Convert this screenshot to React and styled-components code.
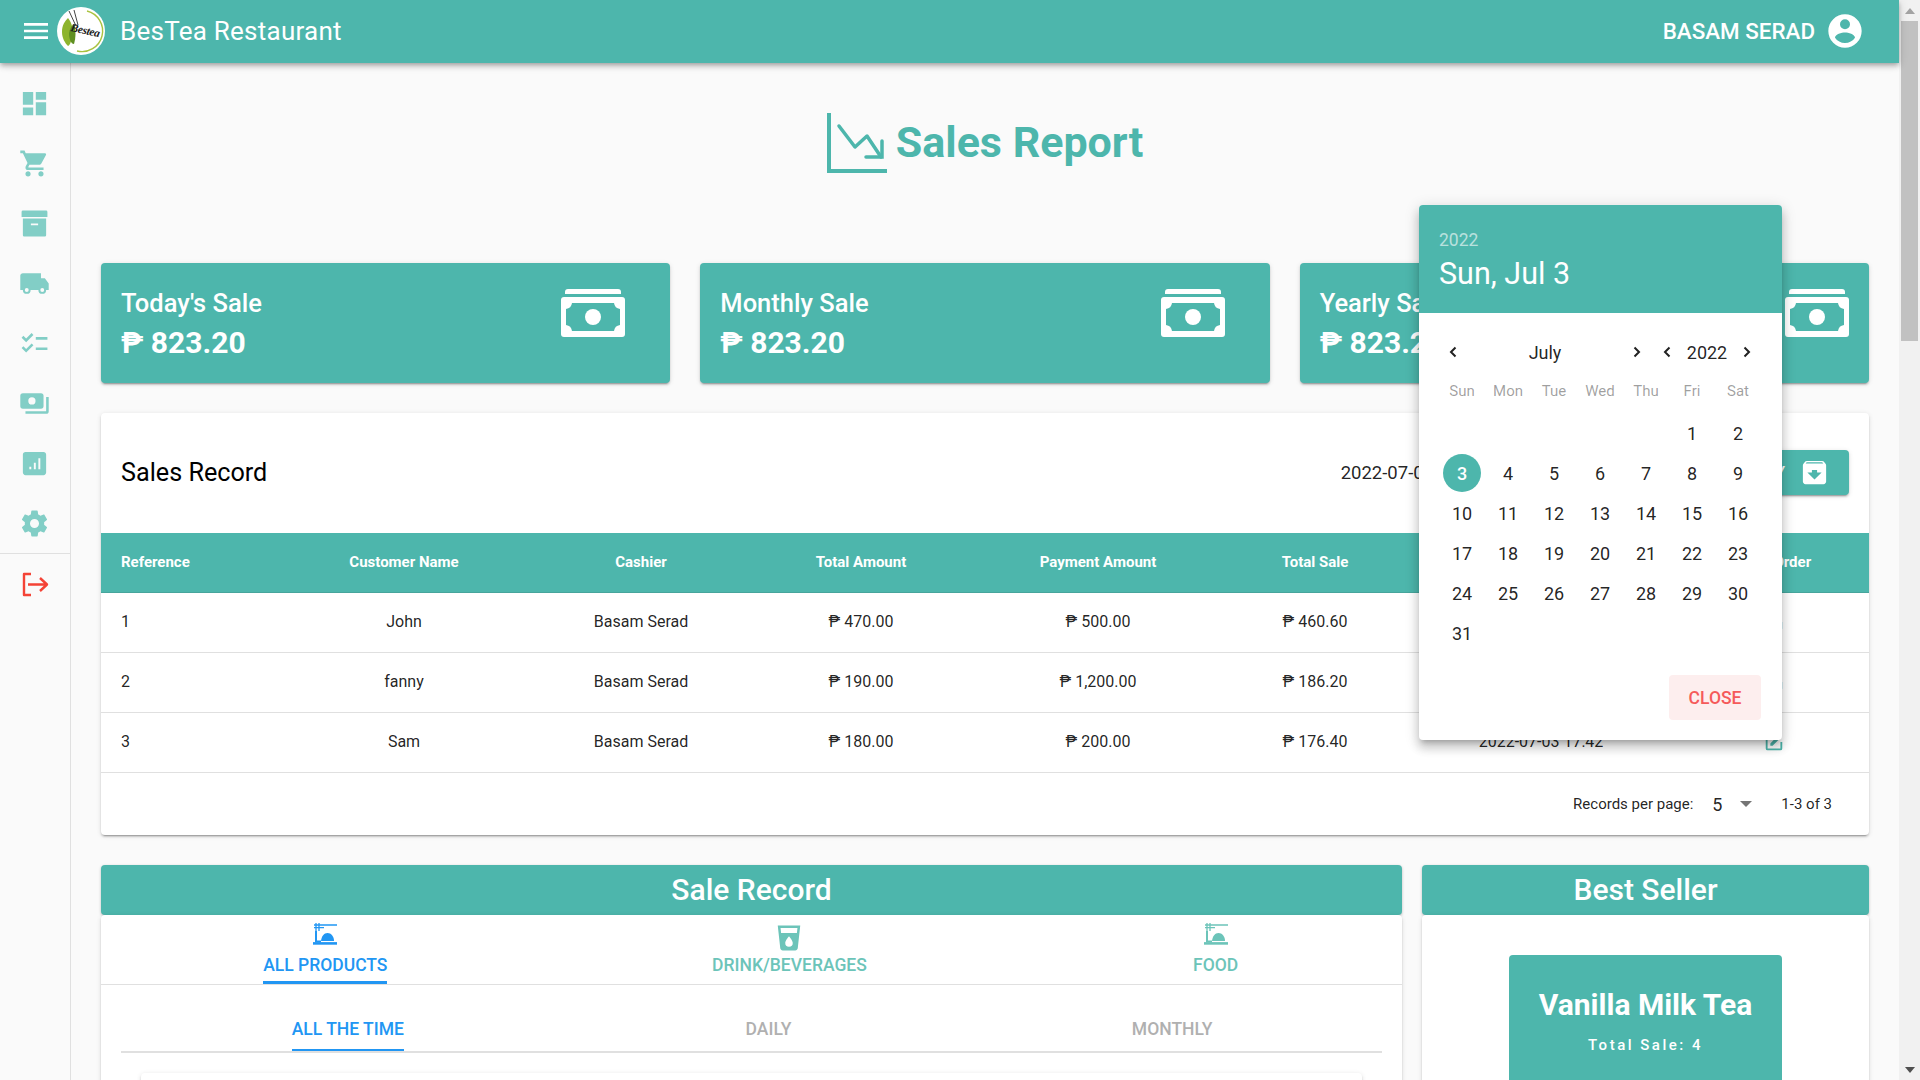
import React from 'react';
import styled, { createGlobalStyle } from 'styled-components';

const TEAL = '#4db6ac';
const BLUE = '#2196f3';

const GlobalStyle = createGlobalStyle`
  * { box-sizing: border-box; }
  html, body { margin: 0; padding: 0; height: 100%; overflow: hidden; }
  body {
    font-family: 'Roboto', 'Liberation Sans', sans-serif;
    background: #fafafa;
    color: rgba(0, 0, 0, 0.87);
  }
`;

/* ---------- Page frame ---------- */
const Shell = styled.div`
  display: flex;
  width: 100vw;
  height: 100vh;
  overflow: hidden;
`;

const Page = styled.div`
  flex: 1;
  min-width: 0;
  display: flex;
  flex-direction: column;
`;

const Body = styled.div`
  flex: 1;
  min-height: 0;
  display: flex;
`;

const Scrollbar = styled.div`
  flex: 0 0 21px;
  display: flex;
  flex-direction: column;
  align-items: center;
  background: #f1f1f1;
`;

const ScrollArrow = styled.div`
  flex: 0 0 21px;
  display: flex;
  align-items: center;
  justify-content: center;
  &::after {
    content: '';
    border-left: 5px solid transparent;
    border-right: 5px solid transparent;
    ${(p) => (p.$down ? 'border-top: 6px solid #505050;' : 'border-bottom: 6px solid #a3a3a3;')}
  }
`;

const ScrollThumb = styled.div`
  flex: 0 0 320px;
  width: 17px;
  background: #c1c1c1;
`;

const ScrollTrack = styled.div`
  flex: 1;
`;

/* ---------- Top bar ---------- */
const TopBar = styled.header`
  flex: 0 0 63px;
  display: flex;
  align-items: center;
  padding: 0 34px 2px 20px;
  background: ${TEAL};
  color: #fff;
  position: relative;
  z-index: 3;
  box-shadow: 0 2px 4px -1px rgba(0, 0, 0, 0.2), 0 4px 5px 0 rgba(0, 0, 0, 0.14), 0 1px 10px 0 rgba(0, 0, 0, 0.12);
`;

const Brand = styled.div`
  margin-left: 15px;
  font-size: 26px;
  letter-spacing: 0.25px;
`;

const LogoWrap = styled.div`
  margin-left: 5px;
  width: 48px;
  height: 48px;
  display: flex;
`;

const UserName = styled.div`
  margin-left: auto;
  margin-right: 10px;
  font-size: 22.4px;
  font-weight: 500;
`;

const Icon = styled.svg`
  display: block;
  flex: none;
  width: ${(p) => p.$size || 24}px;
  height: ${(p) => p.$size || 24}px;
  fill: ${(p) => p.$color || 'currentColor'};
`;

const Glyph = ({ d, size, color }) => (
  <Icon viewBox="0 0 24 24" $size={size} $color={color}>
    <path d={d} fillRule="evenodd" />
  </Icon>
);

const P = {
  menu: 'M3,6H21V8H3V6M3,11H21V13H3V11M3,16H21V18H3V16Z',
  account: 'M12,19.2C9.5,19.2 7.29,17.92 6,16C6.03,14 10,12.9 12,12.9C14,12.9 17.97,14 18,16C16.71,17.92 14.5,19.2 12,19.2M12,5A3,3 0 0,1 15,8A3,3 0 0,1 12,11A3,3 0 0,1 9,8A3,3 0 0,1 12,5M12,2A10,10 0 0,0 2,12A10,10 0 0,0 12,22A10,10 0 0,0 22,12C22,6.47 17.5,2 12,2Z',
  dashboard: 'M13,3V9H21V3M13,21H21V11H13M3,21H11V15H3M3,13H11V3H3V13Z',
  cart: 'M17,18C15.89,18 15,18.89 15,20A2,2 0 0,0 17,22A2,2 0 0,0 19,20C19,18.89 18.1,18 17,18M1,2V4H3L6.6,11.59L5.24,14.04C5.09,14.32 5,14.65 5,15A2,2 0 0,0 7,17H19V15H7.42A0.25,0.25 0 0,1 7.17,14.75C7.17,14.7 7.18,14.66 7.2,14.63L8.1,13H15.55C16.3,13 16.96,12.58 17.3,11.97L20.88,5.5C20.95,5.34 21,5.17 21,5A1,1 0 0,0 20,4H5.21L4.27,2M7,18C5.89,18 5,18.89 5,20A2,2 0 0,0 7,22A2,2 0 0,0 9,20C9,18.89 8.1,18 7,18Z',
  archive: 'M3,2H21A1,1 0 0,1 22,3V7H2V3A1,1 0 0,1 3,2M3,8.2H21V21A1,1 0 0,1 20,22H4A1,1 0 0,1 3,21V8.2M9.2,12V13.4H14.8V12H9.2Z',
  truck: 'M18,18.5A1.5,1.5 0 0,1 16.5,17A1.5,1.5 0 0,1 18,15.5A1.5,1.5 0 0,1 19.5,17A1.5,1.5 0 0,1 18,18.5M6,18.5A1.5,1.5 0 0,1 4.5,17A1.5,1.5 0 0,1 6,15.5A1.5,1.5 0 0,1 7.5,17A1.5,1.5 0 0,1 6,18.5M20,8H17V4H3C1.89,4 1,4.89 1,6V17H3A3,3 0 0,0 6,20A3,3 0 0,0 9,17H15A3,3 0 0,0 18,20A3,3 0 0,0 21,17H23V12L20,8Z',
  checklist: 'M22 7h-9v2h9V7zm0 8h-9v2h9v-2zM5.54 11 2 7.46l1.41-1.41 2.12 2.12 4.24-4.24 1.41 1.41L5.54 11zm0 8L2 15.46l1.41-1.41 2.12 2.12 4.24-4.24 1.41 1.41L5.54 19z',
  cash: 'M3,4H17A2,2 0 0,1 19,6V14A2,2 0 0,1 17,16H3A2,2 0 0,1 1,14V6A2,2 0 0,1 3,4M10,7.2A2.8,2.8 0 0,0 7.2,10A2.8,2.8 0 0,0 10,12.8A2.8,2.8 0 0,0 12.8,10A2.8,2.8 0 0,0 10,7.2M21,7H23V18A2,2 0 0,1 21,20H5V18H21V7Z',
  chart: 'M19 3H5C3.9 3 3 3.9 3 5V19C3 20.1 3.9 21 5 21H19C20.1 21 21 20.1 21 19V5C21 3.9 20.1 3 19 3M9.5 16.5H8V14.5H9.5V16.5M13 16.5H11.5V11.5H13V16.5M16.5 16.5H15V8H16.5V16.5Z',
  cog: 'M12,15.5A3.5,3.5 0 0,1 8.5,12A3.5,3.5 0 0,1 12,8.5A3.5,3.5 0 0,1 15.5,12A3.5,3.5 0 0,1 12,15.5M19.43,12.97C19.47,12.65 19.5,12.33 19.5,12C19.5,11.67 19.47,11.34 19.43,11L21.54,9.37C21.73,9.22 21.78,8.95 21.66,8.73L19.66,5.27C19.54,5.05 19.27,4.96 19.05,5.05L16.56,6.05C16.04,5.66 15.5,5.32 14.87,5.07L14.5,2.42C14.46,2.18 14.25,2 14,2H10C9.75,2 9.54,2.18 9.5,2.42L9.13,5.07C8.5,5.32 7.96,5.66 7.44,6.05L4.95,5.05C4.73,4.96 4.46,5.05 4.34,5.27L2.34,8.73C2.21,8.95 2.27,9.22 2.46,9.37L4.57,11C4.53,11.34 4.5,11.67 4.5,12C4.5,12.33 4.53,12.65 4.57,12.97L2.46,14.63C2.27,14.78 2.21,15.05 2.34,15.27L4.34,18.73C4.46,18.95 4.73,19.03 4.95,18.95L7.44,17.94C7.96,18.34 8.5,18.68 9.13,18.93L9.5,21.58C9.54,21.82 9.75,22 10,22H14C14.25,22 14.46,21.82 14.5,21.58L14.87,18.93C15.5,18.67 16.04,18.34 16.56,17.94L19.05,18.95C19.27,19.03 19.54,18.95 19.66,18.73L21.66,15.27C21.78,15.05 21.73,14.78 21.54,14.63L19.43,12.97Z',
  cup: 'M18.32,8H5.67L5.23,4H18.77M3,2L5,20.23C5.13,21.23 5.97,22 7,22H17C18,22 18.87,21.23 19,20.23L21,2H3M12,19A3,3 0 0,1 9,16C9,14 12,10.6 12,10.6C12,10.6 15,14 15,16A3,3 0 0,1 12,19Z',
  edit: 'M5,3C3.89,3 3,3.89 3,5V19A2,2 0 0,0 5,21H19A2,2 0 0,0 21,19V12H19V19H5V5H12V3H5M17.78,4C17.61,4 17.43,4.07 17.3,4.2L16.08,5.41L18.58,7.91L19.8,6.7C20.06,6.44 20.06,6 19.8,5.75L18.25,4.2C18.12,4.07 17.95,4 17.78,4M15.37,6.12L8,13.5V16H10.5L17.87,8.62L15.37,6.12Z',
  archiveDown: 'M20.54 5.23L19.15 3.55C18.88 3.21 18.47 3 18 3H6C5.53 3 5.12 3.21 4.84 3.55L3.46 5.23C3.17 5.57 3 6 3 6.5V19C3 20.1 3.9 21 5 21H19C20.1 21 21 20.1 21 19V6.5C21 6 20.83 5.57 20.54 5.23M12 17.5L6.5 12H10V10H14V12H17.5L12 17.5M5.12 5L5.93 4H17.93L18.87 5H5.12Z',
};

const LogoText = styled.text`
  font-family: 'Liberation Serif', serif;
  font-style: italic;
  font-size: 11.5px;
  font-weight: 700;
  letter-spacing: -0.3px;
  fill: #1c1c1c;
`;

const Logo = () => (
  <svg viewBox="0 0 48 48" width="48" height="48">
    <circle cx="24" cy="24" r="24" fill="#fff" />
    <path d="M30 4A20.5 20.5 0 0 1 20 44" fill="none" stroke="#a9c23f" strokeWidth="1.4" />
    <path d="M5 25C5 18 8 14 11 11C15 16 17 23 15 31C14 36 12 39 11 39C8 36 5 31 5 25Z" fill="#8db42d" />
    <path d="M12 26C13 21 15 18 17 17C19 23 19 31 17 37C14 37 12 32 12 26Z" fill="#5f8f22" />
    <path d="M12 4L19 19M17 3L21 18" stroke="#444" strokeWidth="1" fill="none" />
    <LogoText x="13" y="24" transform="rotate(12 13 24)">Bestea</LogoText>
  </svg>
);

const TrendIcon = () => (
  <svg viewBox="0 0 60 60" width="60" height="60" fill="none" stroke={TEAL}>
    <path d="M2 0V58H60" strokeWidth="4" />
    <path d="M12 13L28 34L40 23L54 44" strokeWidth="3.5" strokeLinecap="round" strokeLinejoin="round" />
    <path d="M55 28V44H39" strokeWidth="3.5" strokeLinecap="round" />
  </svg>
);

const BillIcon = () => (
  <svg viewBox="0 0 64 48" width="64" height="48">
    <path d="M4 5V3a3 3 0 0 1 3-3H57a3 3 0 0 1 3 3V5Z" fill="#fff" />
    <rect x="0" y="8" width="64" height="40" rx="3" fill="#fff" />
    <path d="M11 14H53A7 7 0 0 0 59 20V36A7 7 0 0 0 53 42H11A7 7 0 0 0 5 36V20A7 7 0 0 0 11 14Z" fill={TEAL} />
    <circle cx="32" cy="28" r="8" fill="#fff" />
  </svg>
);

const NoodleIcon = ({ color }) => (
  <svg viewBox="0 0 24 22" width="24" height="22" fill="none" stroke={color}>
    <path d="M1 2H24M1 4.6H11M3 0V8.5M6 0V8" strokeWidth="1.3" />
    <path d="M3 8V18.5H8" strokeWidth="2" />
    <path d="M8 18C8.5 13 11 10 14.5 10C18 10 21 13.5 21 18Z" fill={color} stroke="none" />
    <path d="M0 20.4H24" strokeWidth="2.6" />
  </svg>
);

/* ---------- Side rail ---------- */
const Rail = styled.nav`
  flex: 0 0 71px;
  display: flex;
  flex-direction: column;
  padding-top: 10px;
  border-right: 1px solid #e0e0e0;
  background: #fafafa;
`;

const RailItem = styled.div`
  flex: 0 0 60px;
  display: flex;
  align-items: center;
  justify-content: center;
  padding-right: 1px;
  color: ${(p) => (p.$danger ? '#f44336' : '#82cec6')};
`;

const RailDivider = styled.div`
  height: 1px;
  background: #e0e0e0;
`;

const ExitIcon = () => (
  <svg viewBox="0 0 28 28" width="28" height="28" fill="none" stroke="#f44336" strokeWidth="2.4">
    <path d="M10 4H3V25H10M7 14.5H26M19 8L26 14.5L19 21" strokeLinejoin="round" />
  </svg>
);

/* ---------- Main column ---------- */
const Main = styled.main`
  flex: 1;
  min-width: 0;
  padding: 0 30px;
  position: relative;
`;

const TitleRow = styled.div`
  height: 200px;
  padding-top: 50px;
  display: flex;
  justify-content: center;
  align-items: flex-start;
  gap: 9px;
`;

const Title = styled.h1`
  margin: 0;
  height: 60px;
  line-height: 58px;
  font-size: 43px;
  font-weight: 700;
  color: ${TEAL};
`;

const StatRow = styled.div`
  display: grid;
  grid-template-columns: repeat(3, 1fr);
  gap: 30px;
`;

const StatCard = styled.div`
  height: 120px;
  padding: 0 20px;
  display: flex;
  align-items: center;
  justify-content: space-between;
  background: ${TEAL};
  color: #fff;
  border-radius: 4px;
  box-shadow: 0 3px 1px -2px rgba(0, 0, 0, 0.2), 0 2px 2px 0 rgba(0, 0, 0, 0.14), 0 1px 5px 0 rgba(0, 0, 0, 0.12);
`;

const StatText = styled.div`
  padding-top: 3px;
`;

const StatLabel = styled.div`
  font-size: 25.5px;
  font-weight: 500;
  line-height: 32px;
`;

const StatValue = styled.div`
  font-size: 30px;
  font-weight: 700;
  line-height: 38px;
  margin-top: 5px;
`;

const StatIcon = styled.div`
  margin-top: -16px;
  margin-right: ${(p) => p.$inset}px;
`;

const Card = styled.section`
  margin-top: 30px;
  background: #fff;
  border-radius: 4px;
  overflow: hidden;
  box-shadow: 0 3px 1px -2px rgba(0, 0, 0, 0.2), 0 2px 2px 0 rgba(0, 0, 0, 0.14), 0 1px 5px 0 rgba(0, 0, 0, 0.12);
`;

const CardHead = styled.div`
  height: 120px;
  padding: 0 20px 1px;
  display: flex;
  align-items: center;
`;

const CardTitle = styled.h2`
  margin: 0;
  font-size: 25.2px;
  font-weight: 400;
  color: #000;
`;

const DateRange = styled.div`
  margin-left: auto;
  width: 350px;
  font-size: 18.5px;
`;

const SummaryButton = styled.div`
  height: 45px;
  padding: 0 19px 0 16px;
  display: flex;
  align-items: center;
  gap: 14px;
  background: ${TEAL};
  color: #fff;
  font-size: 16px;
  font-weight: 500;
  border-radius: 4px;
  box-shadow: 0 3px 1px -2px rgba(0, 0, 0, 0.2), 0 2px 2px 0 rgba(0, 0, 0, 0.14), 0 1px 5px 0 rgba(0, 0, 0, 0.12);
`;

const COLS = '178px 250px 224px 216px 258px 176px 276px 190px';

const HeadRow = styled.div`
  display: grid;
  grid-template-columns: ${COLS};
  height: 60px;
  padding-bottom: 2px;
  align-items: center;
  background: ${TEAL};
  color: #fff;
  font-size: 15px;
  font-weight: 700;
  border-bottom: 1px solid #47a59c;
`;

const DataRow = styled.div`
  display: grid;
  grid-template-columns: ${COLS};
  height: 60px;
  padding-bottom: 2px;
  align-items: center;
  font-size: 16px;
  color: rgba(0, 0, 0, 0.87);
  border-bottom: 1px solid #e0e0e0;
`;

const Cell = styled.div`
  text-align: center;
  display: flex;
  justify-content: center;
  &:first-child {
    justify-content: flex-start;
    padding-left: 20px;
  }
`;

const TableFoot = styled.div`
  height: 62px;
  padding-right: 37px;
  display: flex;
  align-items: center;
  justify-content: flex-end;
  font-size: 15px;
`;

const PerPage = styled.div`
  margin-left: 19px;
  width: 28px;
  font-size: 18px;
`;

const Caret = styled.div`
  width: 0;
  height: 0;
  border-left: 6px solid transparent;
  border-right: 6px solid transparent;
  border-top: 6px solid #757575;
`;

const PageInfo = styled.div`
  margin-left: 29px;
`;

/* ---------- Lower panels ---------- */
const Lower = styled.div`
  margin-top: 30px;
  display: grid;
  grid-template-columns: 1301px 447px;
  gap: 20px;
`;

const Panel = styled.section`
  display: flex;
  flex-direction: column;
`;

const PanelHead = styled.h2`
  margin: 0;
  height: 50px;
  line-height: 50px;
  text-align: center;
  background: ${TEAL};
  color: #fff;
  font-size: 30px;
  font-weight: 500;
  border-radius: 4px;
  box-shadow: 0 1px 3px rgba(0, 0, 0, 0.25);
`;

const PanelBody = styled.div`
  min-height: 500px;
  background: #fff;
  border-radius: 4px;
  box-shadow: 0 3px 1px -2px rgba(0, 0, 0, 0.2), 0 2px 2px 0 rgba(0, 0, 0, 0.14), 0 1px 5px 0 rgba(0, 0, 0, 0.12);
`;

const MainTabs = styled.div`
  display: grid;
  grid-template-columns: 449fr 480fr 373fr;
  height: 70px;
  border-bottom: 1px solid #e0e0e0;
`;

const TabCell = styled.div`
  display: flex;
  justify-content: center;
`;

const MainTab = styled.div`
  height: 69px;
  padding: 8px 0 6px;
  display: flex;
  flex-direction: column;
  align-items: center;
  justify-content: space-between;
  font-size: 17.5px;
  font-weight: 500;
  line-height: 20px;
  color: ${(p) => (p.$active ? BLUE : '#6cc4b9')};
  border-bottom: 3px solid ${(p) => (p.$active ? BLUE : 'transparent')};
`;

const SubTabs = styled.div`
  margin: 21px 20px 0;
  display: grid;
  grid-template-columns: 454fr 388fr 420fr;
  height: 47px;
  border-bottom: 2px solid #e0e0e0;
`;

const SubTab = styled.div`
  height: 45px;
  line-height: 46px;
  font-size: 17.5px;
  font-weight: 500;
  color: ${(p) => (p.$active ? BLUE : '#b0b0b0')};
  border-bottom: 2px solid ${(p) => (p.$active ? BLUE : 'transparent')};
`;

const ChartCard = styled.div`
  margin: 20px 40px 0;
  height: 300px;
  background: #fff;
  border-radius: 4px;
  box-shadow: 0 3px 1px -2px rgba(0, 0, 0, 0.2), 0 2px 2px 0 rgba(0, 0, 0, 0.14), 0 1px 5px 0 rgba(0, 0, 0, 0.12);
`;

const BestBody = styled(PanelBody)`
  display: flex;
  justify-content: center;
  padding-top: 40px;
`;

const BestCard = styled.div`
  width: 273px;
  height: 240px;
  padding-top: 30px;
  background: ${TEAL};
  color: #fff;
  border-radius: 4px;
  text-align: center;
`;

const BestName = styled.div`
  font-size: 30px;
  font-weight: 700;
  line-height: 40px;
`;

const BestSub = styled.div`
  margin-top: 10px;
  font-size: 15px;
  font-weight: 500;
  letter-spacing: 2.5px;
  line-height: 20px;
`;

/* ---------- Date picker overlay ---------- */
const Picker = styled.div`
  position: absolute;
  left: 1348px;
  top: 142px;
  width: 363px;
  height: 535px;
  background: #fff;
  border-radius: 4px;
  overflow: hidden;
  z-index: 2;
  box-shadow: 0 5px 5px -3px rgba(0, 0, 0, 0.2), 0 8px 10px 1px rgba(0, 0, 0, 0.14), 0 3px 14px 2px rgba(0, 0, 0, 0.12);
`;

const PickerHead = styled.div`
  height: 108px;
  padding: 24px 20px 0;
  background: ${TEAL};
  color: #fff;
`;

const PickerYear = styled.div`
  font-size: 17.5px;
  line-height: 22px;
  opacity: 0.6;
`;

const PickerDate = styled.div`
  margin-top: 5px;
  font-size: 30.5px;
  line-height: 36px;
`;

const PickerBody = styled.div`
  padding: 19px 21px 0 20px;
`;

const NavRow = styled.div`
  height: 40px;
  display: grid;
  grid-template-columns: 28px 156px 28px 2px 28px 52px 28px;
  align-items: center;
  font-size: 18px;
  text-align: center;
  color: rgba(0, 0, 0, 0.87);
`;

const Chevron = styled.svg`
  display: block;
  margin: 0 auto;
  width: 20px;
  height: 20px;
  fill: none;
  stroke: rgba(0, 0, 0, 0.87);
  stroke-width: 2;
`;

const DayGrid = styled.div`
  display: grid;
  grid-template-columns: repeat(7, 46px);
  grid-template-rows: 41px;
  grid-auto-rows: 40px;
  align-items: center;
  justify-items: center;
`;

const WeekDay = styled.div`
  margin-bottom: 3px;
  font-size: 15px;
  color: rgba(0, 0, 0, 0.38);
`;

const Day = styled.div`
  width: 38px;
  height: 38px;
  display: flex;
  align-items: center;
  justify-content: center;
  font-size: 18px;
  border-radius: 50%;
  ${(p) => p.$selected && `background: ${TEAL}; color: #fff; font-weight: 500;`}
`;

const PickerActions = styled.div`
  margin-top: 22px;
  display: flex;
  justify-content: flex-end;
`;

const CloseButton = styled.div`
  width: 92px;
  height: 45px;
  display: flex;
  align-items: center;
  justify-content: center;
  background: #fdeeee;
  color: #f55a5a;
  font-size: 17.5px;
  font-weight: 500;
  border-radius: 4px;
`;

const railIcons = [P.dashboard, P.cart, P.archive, P.truck, P.checklist, P.cash, P.chart, P.cog];

const rows = [
  { ref: 1, name: 'John', total: '470.00', paid: '500.00', sale: '460.60', date: '2022-07-03 17:15', tint: '#81d4e8' },
  { ref: 2, name: 'fanny', total: '190.00', paid: '1,200.00', sale: '186.20', date: '2022-07-03 17:30', tint: '#81d4e8' },
  { ref: 3, name: 'Sam', total: '180.00', paid: '200.00', sale: '176.40', date: '2022-07-03 17:42', tint: TEAL },
];

const stats = [
  { label: "Today's Sale", inset: 25 },
  { label: 'Monthly Sale', inset: 25 },
  { label: 'Yearly Sale', inset: 0 },
];
const weekDays = ['Sun', 'Mon', 'Tue', 'Wed', 'Thu', 'Fri', 'Sat'];
const days = [...Array(5).fill(''), ...Array.from({ length: 31 }, (_, i) => i + 1)];

const Left = () => (
  <Chevron viewBox="0 0 20 20"><path d="M12.5 5.5L8 10L12.5 14.5" /></Chevron>
);
const Right = () => (
  <Chevron viewBox="0 0 20 20"><path d="M7.5 5.5L12 10L7.5 14.5" /></Chevron>
);

const App = () => (
  <Shell>
    <GlobalStyle />
    <Page>
      <TopBar>
        <Glyph d={P.menu} size={32} />
        <LogoWrap><Logo /></LogoWrap>
        <Brand>BesTea Restaurant</Brand>
        <UserName>BASAM SERAD</UserName>
        <Glyph d={P.account} size={40} />
      </TopBar>
      <Body>
        <Rail>
          {railIcons.map((d) => (
            <RailItem key={d}><Glyph d={d} size={31} /></RailItem>
          ))}
          <RailDivider />
          <RailItem $danger><ExitIcon /></RailItem>
        </Rail>
        <Main>
          <TitleRow>
            <TrendIcon />
            <Title>Sales Report</Title>
          </TitleRow>

          <StatRow>
            {stats.map((s) => (
              <StatCard key={s.label}>
                <StatText>
                  <StatLabel>{s.label}</StatLabel>
                  <StatValue>₱ 823.20</StatValue>
                </StatText>
                <StatIcon $inset={s.inset}><BillIcon /></StatIcon>
              </StatCard>
            ))}
          </StatRow>

          <Card>
            <CardHead>
              <CardTitle>Sales Record</CardTitle>
              <DateRange>2022-07-03</DateRange>
              <SummaryButton>
                SUMMARY
                <Glyph d={P.archiveDown} size={31} />
              </SummaryButton>
            </CardHead>
            <HeadRow>
              <Cell>Reference</Cell>
              <Cell>Customer Name</Cell>
              <Cell>Cashier</Cell>
              <Cell>Total Amount</Cell>
              <Cell>Payment Amount</Cell>
              <Cell>Total Sale</Cell>
              <Cell>Date</Cell>
              <Cell>View Order</Cell>
            </HeadRow>
            {rows.map((r) => (
              <DataRow key={r.ref}>
                <Cell>{r.ref}</Cell>
                <Cell>{r.name}</Cell>
                <Cell>Basam Serad</Cell>
                <Cell>₱ {r.total}</Cell>
                <Cell>₱ {r.paid}</Cell>
                <Cell>₱ {r.sale}</Cell>
                <Cell>{r.date}</Cell>
                <Cell><Glyph d={P.edit} size={22} color={r.tint} /></Cell>
              </DataRow>
            ))}
            <TableFoot>
              Records per page:
              <PerPage>5</PerPage>
              <Caret />
              <PageInfo>1-3 of 3</PageInfo>
            </TableFoot>
          </Card>

          <Lower>
            <Panel>
              <PanelHead>Sale Record</PanelHead>
              <PanelBody>
                <MainTabs>
                  <TabCell>
                    <MainTab $active><NoodleIcon color={BLUE} />ALL PRODUCTS</MainTab>
                  </TabCell>
                  <TabCell>
                    <MainTab><Glyph d={P.cup} size={30} />DRINK/BEVERAGES</MainTab>
                  </TabCell>
                  <TabCell>
                    <MainTab><NoodleIcon color="#6cc4b9" />FOOD</MainTab>
                  </TabCell>
                </MainTabs>
                <SubTabs>
                  <TabCell><SubTab $active>ALL THE TIME</SubTab></TabCell>
                  <TabCell><SubTab>DAILY</SubTab></TabCell>
                  <TabCell><SubTab>MONTHLY</SubTab></TabCell>
                </SubTabs>
                <ChartCard />
              </PanelBody>
            </Panel>
            <Panel>
              <PanelHead>Best Seller</PanelHead>
              <BestBody>
                <BestCard>
                  <BestName>Vanilla Milk Tea</BestName>
                  <BestSub>Total Sale: 4</BestSub>
                </BestCard>
              </BestBody>
            </Panel>
          </Lower>

          <Picker>
            <PickerHead>
              <PickerYear>2022</PickerYear>
              <PickerDate>Sun, Jul 3</PickerDate>
            </PickerHead>
            <PickerBody>
              <NavRow>
                <Left />
                <span>July</span>
                <Right />
                <span />
                <Left />
                <span>2022</span>
                <Right />
              </NavRow>
              <DayGrid>
                {weekDays.map((d) => <WeekDay key={d}>{d}</WeekDay>)}
                {days.map((d, i) => (
                  <Day key={i} $selected={d === 3}>{d}</Day>
                ))}
              </DayGrid>
              <PickerActions>
                <CloseButton>CLOSE</CloseButton>
              </PickerActions>
            </PickerBody>
          </Picker>
        </Main>
      </Body>
    </Page>
    <Scrollbar>
      <ScrollArrow />
      <ScrollThumb />
      <ScrollTrack />
      <ScrollArrow $down />
    </Scrollbar>
  </Shell>
);

export default App;
